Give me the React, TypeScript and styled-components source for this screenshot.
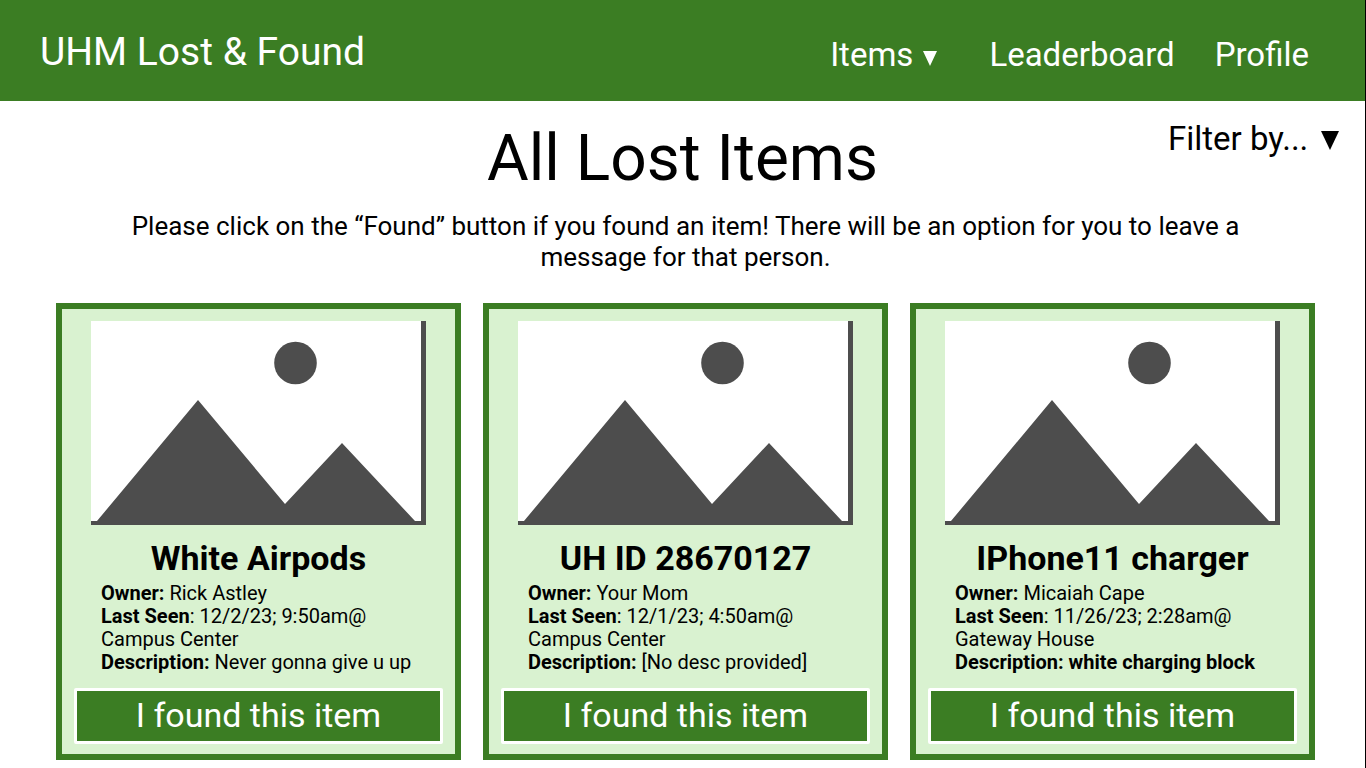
import React from "react";
import styled, { createGlobalStyle } from "styled-components";

const GREEN = "#3b7d23";
const PALE_GREEN = "#d9f2d0";
const SLATE = "#4d4d4d";

const GlobalStyle = createGlobalStyle`
  *, *::before, *::after { box-sizing: border-box; }
  body { margin: 0; background: #fff; }
  h1, h2, p { margin: 0; font-weight: 400; }
  button, select { font: inherit; }
`;

const Page = styled.div`
  min-height: 100vh;
  border-right: 1px solid #000;
  padding-bottom: 8px;
  font-family: Roboto, "Liberation Sans", sans-serif;
  color: #000;
`;

const Header = styled.header`
  display: flex;
  align-items: center;
  justify-content: space-between;
  height: 101px;
  padding: 0 56px 0 40px;
  background: ${GREEN};
  color: #fff;
`;

const Brand = styled.a`
  font-size: 39px;
  line-height: 48px;
  padding-top: 2px;
  color: inherit;
  text-decoration: none;
`;

const Nav = styled.nav`
  display: flex;
  align-items: center;
  padding-top: 8px;
  font-size: 33px;
  line-height: 40px;
`;

const NavButton = styled.button`
  display: flex;
  align-items: center;
  gap: 10px;
  margin-right: 52px;
  padding: 0;
  border: 0;
  background: none;
  color: inherit;
  line-height: 40px;
  cursor: pointer;

  svg {
    margin-top: 8px;
  }
`;

const NavLink = styled.a`
  color: inherit;
  text-decoration: none;

  & + & {
    margin-left: 40px;
  }
`;

const TitleRow = styled.div`
  display: grid;
  grid-template-columns: 1fr auto 1fr;
  align-items: start;
  padding: 18px 26px 0;
`;

const Title = styled.h1`
  grid-column: 2;
  font-size: 64px;
  line-height: 80px;
`;

const Filter = styled.label`
  position: relative;
  justify-self: end;
  font-size: 33px;
  line-height: 40px;

  svg {
    position: absolute;
    right: 0;
    top: 12px;
    pointer-events: none;
  }
`;

const FilterSelect = styled.select`
  appearance: none;
  display: block;
  padding: 0 30px 0 0;
  border: 0;
  background: none;
  color: inherit;
  line-height: 40px;
  cursor: pointer;
`;

const Main = styled.main`
  padding: 0 50px 0 56px;
`;

const Intro = styled.p`
  max-width: 1120px;
  margin: 12px auto 30px;
  font-size: 26px;
  line-height: 31px;
  text-align: center;
`;

const CardGrid = styled.section`
  display: grid;
  grid-template-columns: repeat(3, 1fr);
  gap: 22px;
`;

const Card = styled.article`
  display: flex;
  flex-direction: column;
  padding: 12px 12px 10px;
  border: 6px solid ${GREEN};
  background: ${PALE_GREEN};
`;

const Picture = styled.svg`
  display: block;
  width: auto;
  height: auto;
  margin: 0 17px;
`;

const CardTitle = styled.h2`
  margin: 13px 0 4px;
  font-size: 34px;
  font-weight: 700;
  line-height: 40px;
  text-align: center;
`;

const Details = styled.div`
  flex: 1;
  padding: 0 24px 0 27px;
  font-size: 20px;
  line-height: 23px;
`;

const FoundButton = styled.button`
  height: 56px;
  margin-top: 14px;
  padding: 0 0 2px;
  border: 3px solid #fff;
  border-radius: 2px;
  background: ${GREEN};
  color: #fff;
  font-size: 34px;
  line-height: 40px;
  cursor: pointer;
`;

function Caret({ width, height }: { width: number; height: number }) {
  return (
    <svg width={width} height={height} viewBox="0 0 18 19" preserveAspectRatio="none" aria-hidden="true">
      <path d="M0 0H18L9 19Z" fill="currentColor" />
    </svg>
  );
}

function Placeholder() {
  return (
    <Picture viewBox="0 0 335 204" role="img" aria-label="Item photo">
      <rect width="335" height="204" fill="#fff" />
      <path d="M330 0H335V204H0V200H6L107 79L194 183L251 122L324 200H330Z" fill={SLATE} />
      <circle cx="204.500" cy="42" r="21.300" fill={SLATE} />
    </Picture>
  );
}

interface Item {
  name: string;
  owner: string;
  seen: string;
  place: string;
  description: string;
  boldDescription?: boolean;
}

const items: Item[] = [
  { name: "White Airpods", owner: "Rick Astley", seen: "12/2/23; 9:50am@", place: "Campus Center", description: "Never gonna give u up" },
  { name: "UH ID 28670127", owner: "Your Mom", seen: "12/1/23; 4:50am@", place: "Campus Center", description: "[No desc provided]" },
  { name: "IPhone11 charger", owner: "Micaiah Cape", seen: "11/26/23; 2:28am@", place: "Gateway House", description: "white charging block", boldDescription: true },
];

function ItemCard({ item }: { item: Item }) {
  return (
    <Card>
      <Placeholder />
      <CardTitle>{item.name}</CardTitle>
      <Details>
        <p><strong>Owner:</strong> {item.owner}</p>
        <p><strong>Last Seen</strong>: {item.seen}<br />{item.place}</p>
        <p>
          <strong>Description:</strong>{" "}
          {item.boldDescription ? <strong>{item.description}</strong> : item.description}
        </p>
      </Details>
      <FoundButton type="button">I found this item</FoundButton>
    </Card>
  );
}

export default function App() {
  return (
    <Page>
      <GlobalStyle />
      <Header>
        <Brand href="#">UHM Lost &amp; Found</Brand>
        <Nav>
          <NavButton type="button" aria-haspopup="menu">
            Items <Caret width={14} height={15} />
          </NavButton>
          <NavLink href="#leaderboard">Leaderboard</NavLink>
          <NavLink href="#profile">Profile</NavLink>
        </Nav>
      </Header>
      <TitleRow>
        <Title>All Lost Items</Title>
        <Filter>
          <FilterSelect aria-label="Filter items" defaultValue="">
            <option value="">Filter by...</option>
          </FilterSelect>
          <Caret width={18} height={19} />
        </Filter>
      </TitleRow>
      <Main>
        <Intro>
          Please click on the “Found” button if you found an item! There will be an option for
          you to leave a message for that person.
        </Intro>
        <CardGrid>
          {items.map((item) => (
            <ItemCard key={item.name} item={item} />
          ))}
        </CardGrid>
      </Main>
    </Page>
  );
}
